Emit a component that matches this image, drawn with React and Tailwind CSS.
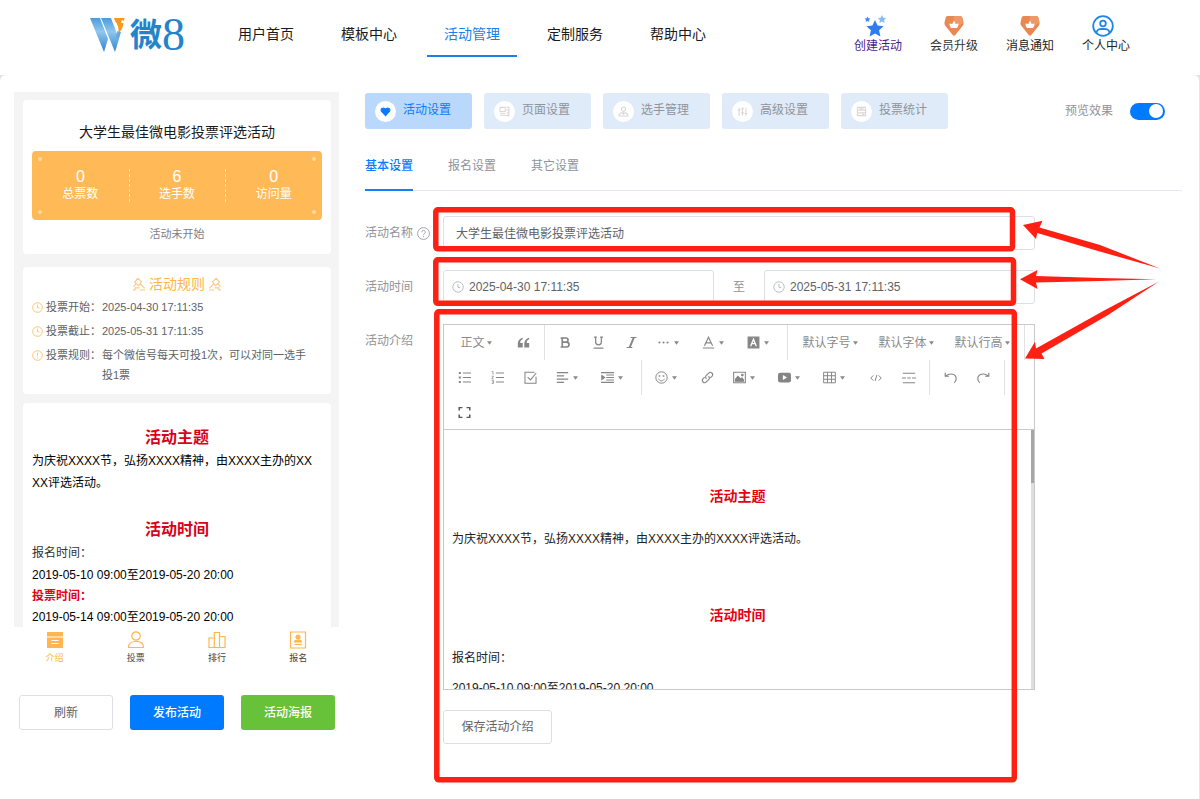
import React, { useState } from "react";

const FONT = "font-['Liberation_Sans','Noto_Sans_CJK_SC',sans-serif]";

function Svg({ children, className = "size-[14px]", box = "0 0 16 16", fill = "none", width = 1.2 }) {
  return (
    <svg viewBox={box} className={className} fill={fill} stroke="currentColor" strokeWidth={width} aria-hidden="true">
      {children}
    </svg>
  );
}

function Logo() {
  return (
    <a href="#home" aria-label="微8" className="flex h-[40px] items-center text-[#2484cb]">
      <svg viewBox="0 0 36 36" className="h-[36px] w-[36px]" aria-hidden="true">
        <defs>
          <linearGradient id="stripe" x1="0" y1="0" x2="0" y2="1">
            <stop offset="0" stopColor="#4d9bd8" />
            <stop offset="0.4" stopColor="#8fc6ee" />
            <stop offset="1" stopColor="#2f86cd" />
          </linearGradient>
        </defs>
        <path d="M0 1H10L18 22L14 35Z" fill="url(#stripe)" />
        <path d="M11 1H21L29 22L25 35Z" fill="url(#stripe)" />
        <path d="M15 30L17.500 22L14 35Z" fill="#5fa9df" />
        <path d="M25 35L31 15L27.500 14L26 20L29 22Z" fill="#5fa9df" />
        <path d="M24 1H34.500L34 4L32 3L31 6L33.500 6C33 10 32 13 28.500 16C29 11 28 8 25 4Z" fill="#f59a1c" />
      </svg>
      <span className="ml-[4px] text-[32px] leading-[40px] font-bold">微</span>
      <span className="font-['Liberation_Serif',serif] text-[46px] leading-[40px]">8</span>
    </a>
  );
}

const NAV = ["用户首页", "模板中心", "活动管理", "定制服务", "帮助中心"];

function Gem() {
  return (
    <svg viewBox="0 0 22 22" className="size-[22px]" aria-hidden="true">
      <path d="M4.500 1H17.500Q18.800 1 19.300 2.500L20.500 7.500Q20.900 9 19.900 10.400L12.500 19.800Q11 21.500 9.500 19.800L2.100 10.400Q1.100 9 1.500 7.500L2.700 2.500Q3.200 1 4.500 1Z" fill="#e98850" />
      <path d="M11 1H17.500Q18.800 1 19.300 2.500L20.500 7.500L11 14Z" fill="#ee9968" />
      <path d="M6.500 8.500L9.300 9L11 5.500L12.700 9L15.500 8.500C15.500 10.500 14.800 12.500 14 13H8C7.200 12.500 6.500 10.500 6.500 8.500Z" fill="#fff" />
    </svg>
  );
}

function Stars() {
  return (
    <svg viewBox="0 0 24 24" className="mr-[6px] size-[24px] shrink-0" aria-hidden="true">
      <path d="M12 6L14.600 11.600L20.500 12.200L16.100 16.300L17.400 22.500L12 19.400L6.600 22.500L7.900 16.300L3.500 12.200L9.400 11.600Z" fill="#2e7cf0" />
      <path d="M4.500 2.500L5.400 4.300L7.400 4.600L6 6L6.300 8L4.500 7L2.700 8L3 6L1.600 4.600L3.600 4.300Z" fill="#3f8cf5" />
      <path d="M19 1L20.300 3.700L23.200 4.100L21.100 6.100L21.600 9L19 7.600L16.400 9L16.900 6.100L14.800 4.100L17.700 3.700Z" fill="#86bbf5" />
    </svg>
  );
}

function Person() {
  return (
    <svg viewBox="0 0 22 22" className="mr-[6px] size-[22px]" fill="none" stroke="#1e86ea" strokeWidth="1.800" aria-hidden="true">
      <circle cx="11" cy="11" r="9.800" />
      <circle cx="11" cy="8.500" r="2.800" />
      <path d="M4.500 18C5 13.500 8 14 11 14S17 13.500 17.500 18" />
    </svg>
  );
}

const ACTIONS = [
  ["创建活动", <Stars key="a" />, "text-[#4b1a8a]"],
  ["会员升级", <Gem key="b" />, "text-[#333]"],
  ["消息通知", <Gem key="c" />, "text-[#222]"],
  ["个人中心", <Person key="d" />, "text-[#222]"],
];

function Header() {
  return (
    <header className="flex h-[75px] items-start bg-white pl-[90px] pr-[70px]">
      <div className="mt-[15px] w-[131px]">
        <Logo />
      </div>
      <nav className="flex gap-[13px]">
        {NAV.map((n) => (
          <a
            key={n}
            href="#nav"
            className={
              n === "活动管理"
                ? "h-[57px] w-[90px] border-b-2 border-[#1b7fe6] pt-[23px] text-center text-[14px] leading-[22px] text-[#1b7fe6]"
                : "h-[57px] w-[90px] pt-[23px] text-center text-[14px] leading-[22px] text-[#1a1a1a]"
            }
          >
            {n}
          </a>
        ))}
      </nav>
      <div className="ml-auto flex gap-[28px] pt-[15px] text-[12px] leading-[18px]">
        {ACTIONS.map(([label, icon, color]) => (
          <a key={label} href="#action" className={color}>
            <span className="flex h-[22px] items-center justify-center">{icon}</span>
            <span className="block whitespace-nowrap">{label}</span>
          </a>
        ))}
      </div>
    </header>
  );
}

function Gavel({ flip }) {
  return (
    <svg viewBox="0 0 16 16" className={flip ? "size-[14px]" : "size-[14px] -scale-x-100"} fill="none" stroke="#fbc98a" strokeWidth="1.300" aria-hidden="true">
      <path d="M5 5.500L9.500 1.500L13 6L8.500 10ZM6.500 8L1.500 13M11.500 8L14.500 11M1 14.800H7M7.500 12.500H12.500V14.800H15" />
    </svg>
  );
}

function ClockIcon({ className }) {
  return (
    <Svg className={className}>
      <circle cx="8" cy="8" r="7" />
      <path d="M8 4V8.500H11" />
    </Svg>
  );
}

function Rule({ icon, label, children }) {
  return (
    <div className="flex items-start pb-[4px] text-[11px] leading-[20px] text-[#606266]">
      <span className="flex h-[20px] w-[14px] items-center text-[#ffb956]">{icon}</span>
      <span className="w-[56px] shrink-0">{label}：</span>
      <span className="w-[212px]">{children}</span>
    </div>
  );
}

const BOTTOM = [
  ["介绍", (
    <svg key="a" viewBox="0 0 18 18" className="size-[18px]" aria-hidden="true">
      <path d="M1 1H17V17H1Z" fill="#ffb550" />
      <path d="M1 6H17M5.500 9.500H12.500M5.500 12.500H12.500" stroke="#fff" strokeWidth="1.100" />
    </svg>
  )],
  ["投票", (
    <Svg key="b" box="0 0 18 18" className="size-[18px]">
      <circle cx="9" cy="5" r="4.200" />
      <path d="M1.500 16.500C1.500 12 4 10.500 9 10.500S16.500 12 16.500 16.500Z" />
    </Svg>
  )],
  ["排行", (
    <Svg key="c" box="0 0 18 18" className="size-[18px]">
      <path d="M1 16.500V7H6.300V16.500ZM6.300 16.500V1.500H11.500V16.500ZM11.500 16.500V5.500H17V16.500Z" />
    </Svg>
  )],
  ["报名", (
    <Svg key="d" box="0 0 18 18" className="size-[18px]">
      <path d="M1.500 1H16.500V17H1.500Z" />
      <circle cx="9" cy="6" r="2" fill="currentColor" />
      <path d="M5.500 11C5.500 8.500 12.500 8.500 12.500 11Z" fill="currentColor" />
      <path d="M5.500 13.500H12.500" />
    </Svg>
  )],
];

function Phone() {
  return (
    <aside className="w-[325px] shrink-0">
      <div className="flex h-[535px] flex-col gap-[9px] overflow-hidden bg-[#f4f4f4] pr-[8px] pl-[9px] pt-[8px]">
        <section className="mb-[4px] h-[154px] shrink-0 rounded-[4px] bg-white px-[9px] pt-[21px] text-center">
          <h1 className="text-[14px] leading-[22px] text-[#1a1a1a]">大学生最佳微电影投票评选活动</h1>
          <dl className="relative mt-[8px] grid h-[69px] grid-cols-3 rounded-[4px] bg-[#ffba57] text-white">
            {[["总票数", "0"], ["选手数", "6"], ["访问量", "0"]].map(([k, v]) => (
              <div key={k} className="flex flex-col-reverse justify-end pt-[17px]">
                <dt className="text-[12px] leading-[16px]">{k}</dt>
                <dd className="text-[16px] leading-[18px]">{v}</dd>
              </div>
            ))}
            <i className="absolute top-[18px] left-1/3 h-[33px] border-l border-dashed border-[#ffe0b0]" />
            <i className="absolute top-[18px] left-2/3 h-[33px] border-l border-dashed border-[#ffe0b0]" />
            <i className="absolute top-[6px] left-[6px] size-[4px] rounded-full bg-[#ffd9a0]" />
            <i className="absolute top-[6px] right-[6px] size-[4px] rounded-full bg-[#ffd9a0]" />
            <i className="absolute bottom-[6px] left-[6px] size-[4px] rounded-full bg-[#ffd9a0]" />
            <i className="absolute right-[6px] bottom-[6px] size-[4px] rounded-full bg-[#ffd9a0]" />
          </dl>
          <p className="mt-[4px] text-[11px] leading-[20px] text-[#7a7f8a]">活动未开始</p>
        </section>
        <section className="h-[127px] shrink-0 rounded-[4px] bg-white px-[9px] pt-[7px]">
          <h2 className="mb-[3px] flex items-center justify-center gap-[3px] text-[14px] leading-[20px] text-[#ffb547]">
            <Gavel />
            活动规则
            <Gavel flip />
          </h2>
          <Rule label="投票开始" icon={<ClockIcon className="size-[11px]" />}>2025-04-30 17:11:35</Rule>
          <Rule label="投票截止" icon={<ClockIcon className="size-[11px]" />}>2025-05-31 17:11:35</Rule>
          <Rule
            label="投票规则"
            icon={
              <Svg className="size-[11px]">
                <circle cx="8" cy="8" r="7" />
                <path d="M8 4V9M8 10.500V12" />
              </Svg>
            }
          >
            每个微信号每天可投1次，可以对同一选手投1票
          </Rule>
        </section>
        <section className="grow rounded-t-[4px] bg-white px-[9px] pt-[23px] text-[12px] leading-[22px] text-black">
          <h2 className="text-center text-[16px] leading-[24px] font-bold text-[#d9001b]">活动主题</h2>
          <p className="pr-[6px] break-all">为庆祝XXXX节，弘扬XXXX精神，由XXXX主办的XXXX评选活动。</p>
          <h2 className="mt-[24px] text-center text-[16px] leading-[24px] font-bold text-[#d9001b]">活动时间</h2>
          <p className="text-[#333]">报名时间：</p>
          <p>2019-05-10 09:00至2019-05-20 20:00</p>
          <p className="leading-[21px] font-bold text-[#e60012]">投票时间：</p>
          <p className="leading-[21px] whitespace-nowrap">2019-05-14 09:00至2019-05-20 20:00</p>
        </section>
      </div>
      <nav className="grid grid-cols-4 pt-[4px] text-center text-[9px] leading-[19px]">
        {BOTTOM.map(([label, icon], i) => (
          <a key={label} href="#tab" className="flex flex-col items-center text-[#ffb550]">
            {icon}
            <span className={i === 0 ? "text-[#ffb550]" : "text-[#444]"}>{label}</span>
          </a>
        ))}
      </nav>
      <div className="mt-[27px] grid grid-cols-3 gap-[17px] pr-[4px] pl-[5px] text-[12px]">
        <button className="h-[35px] rounded-[3px] border border-[#dcdfe6] bg-white text-[#606266]">刷新</button>
        <button className="h-[35px] rounded-[3px] bg-[#007bff] font-medium text-white">发布活动</button>
        <button className="h-[35px] rounded-[3px] bg-[#67c23a] font-medium text-white">活动海报</button>
      </div>
    </aside>
  );
}

const TABS = [
  ["活动设置", <path key="p" d="M8 14L2 7.500C0 4 4.500 1.500 8 4.500C11.500 1.500 16 4 14 7.500Z" fill="currentColor" />],
  ["页面设置", <path key="p" d="M1.500 2H9V8H1.500ZM11 2H14.500V14H11M1.500 10.500H9M1.500 13.500H14.500M11 6H14.500M11 10H14.500" />],
  ["选手管理", <path key="p" d="M8 1.500A3 3 0 1 1 8 7.500A3 3 0 1 1 8 1.500ZM8 7.500V11M1.500 14.500C1.500 11 4 10 5.500 9.500L8 12L10.500 9.500C12 10 14.500 11 14.500 14.500Z" />],
  ["高级设置", <path key="p" d="M3 2V14M1 6H5M8 2V14M6 4H10M6 10H10M13 2V14M11 11H15" />],
  ["投票统计", <path key="p" d="M2 2H14V6H2ZM2 6H14V14H2ZM2 10H14M5 4H11M9 12H12" />],
];

function Sep() {
  return (
    <span className="flex h-[35px] w-[9px] justify-center">
      <i className="w-px bg-[#e2e2e2]" />
    </span>
  );
}

function Tool({ label, drop, children }) {
  return (
    <button
      aria-label={label}
      className={
        drop
          ? "flex h-[35px] w-[45px] items-center justify-center gap-[4px] pr-[5px] text-[#858585]"
          : "flex h-[35px] w-[33px] items-center justify-center text-[#858585]"
      }
    >
      {children}
      {drop && <Caret />}
    </button>
  );
}

function Caret() {
  return (
    <svg viewBox="0 0 6 4" className="h-[4px] w-[5px]" fill="#8a8a8a" aria-hidden="true">
      <path d="M0 0H6L3 4Z" />
    </svg>
  );
}

function TextTool({ children, wide }) {
  return (
    <button
      className={
        wide
          ? "flex h-[35px] w-[76px] items-center justify-center gap-[2px] text-[12px] text-[#8a8a8a]"
          : "flex h-[35px] w-[59px] items-center justify-center gap-[2px] pr-[3px] text-[12px] text-[#8a8a8a]"
      }
    >
      {children}
      <Caret />
    </button>
  );
}

function Toolbar() {
  return (
    <div role="toolbar" className="flex h-[105px] flex-wrap content-start border-b border-[#c9c9c9] pl-[4px]">
      <TextTool>正文</TextTool>
      <Tool label="引用">
        <Svg className="size-[13px]" fill="currentColor" width={0}>
          <path d="M7 2C4 3 1 5 1 10V14H7V8.500H4C4 6 5 4.500 7 4ZM15 2C12 3 9 5 9 10V14H15V8.500H12C12 6 13 4.500 15 4Z" />
        </Svg>
      </Tool>
      <Sep />
      <Tool label="粗体">
        <Svg className="size-[13px]" width={2}>
          <path d="M4 2.500H8.500C12 2.500 12 7.500 8.500 7.500H4ZM4 7.500H9C13.500 7.500 13.500 13.500 9 13.500H4ZM2 2.500H5M2 13.500H5" />
        </Svg>
      </Tool>
      <Tool label="下划线">
        <Svg className="size-[13px]" width={1.5}>
          <path d="M4.500 1.500V7.500C4.500 12 11.500 12 11.500 7.500V1.500M2.500 1.500H6M10 1.500H13.500M2 14.800H14" />
        </Svg>
      </Tool>
      <Tool label="斜体">
        <Svg className="size-[13px]" width={1.4}>
          <path d="M7 1.800H14M2 14.200H9" />
          <path d="M10.800 2L5.800 14" strokeWidth="2.400" />
        </Svg>
      </Tool>
      <Tool label="更多" drop>
        <Svg className="size-[13px]" fill="currentColor" width={0}>
          <circle cx="3" cy="8" r="1.300" />
          <circle cx="8" cy="8" r="1.300" />
          <circle cx="13" cy="8" r="1.300" />
        </Svg>
      </Tool>
      <Tool label="文字颜色" drop>
        <Svg className="size-[13px]" width={1.4}>
          <path d="M3 12L8 1.500L13 12M5 8.500H11M1 14.800H15" />
        </Svg>
      </Tool>
      <Tool label="背景色" drop>
        <Svg className="size-[13px]" width={1.6}>
          <path d="M1.500 1.500H14.500V14.500H1.500Z" fill="currentColor" />
          <path d="M4.500 12.500L8 4L11.500 12.500M6 9.500H10" stroke="#fff" />
        </Svg>
      </Tool>
      <Sep />
      <TextTool wide>默认字号</TextTool>
      <TextTool wide>默认字体</TextTool>
      <TextTool wide>默认行高</TextTool>
      <Sep />
      <Tool label="无序列表">
        <Svg className="size-[13px]" width={1.4}>
          <path d="M6 2.500H16M6 8H16M6 13.500H16" />
          <path d="M1 2.500H3.500M1 8H3.500M1 13.500H3.500" strokeWidth="2.600" />
        </Svg>
      </Tool>
      <Tool label="有序列表">
        <Svg className="size-[13px]" width={1.3}>
          <path d="M6 2.500H16M6 8H16M6 13.500H16" />
          <path d="M1 1L2.500 .5V4.500M.8 6.500H3L1 9.500H3.200M.8 11.500H3V15.300H.8M1.500 13.400H3" strokeWidth="0.900" />
        </Svg>
      </Tool>
      <Tool label="待办">
        <Svg className="size-[13px]" width={1.3}>
          <path d="M14.800 7V15H1.200V1.500H13M4.500 7.500L8 11L15 2.500" />
        </Svg>
      </Tool>
      <Tool label="对齐" drop>
        <Svg className="size-[13px]" width={1.3}>
          <path d="M1 2H15M1 6H10M1 10H15M1 14H10" />
        </Svg>
      </Tool>
      <Tool label="缩进" drop>
        <Svg className="size-[13px]" width={1.3}>
          <path d="M0 2H16M6.500 5H16M6.500 8H16M6.500 11H16M0 14H16" />
          <path d="M1 5.500L4.500 8L1 10.500Z" fill="currentColor" />
        </Svg>
      </Tool>
      <Sep />
      <Tool label="表情" drop>
        <Svg className="size-[13px]">
          <circle cx="8" cy="8" r="7" />
          <path d="M4.500 9.500C5.500 13 10.500 13 11.500 9.500" />
          <path d="M4.500 6.200H6.500M9.500 6.200H11.500" strokeWidth="1.800" />
        </Svg>
      </Tool>
      <Tool label="链接">
        <Svg className="size-[13px]" width={1.4}>
          <path d="M6.800 9.500C5.200 8 5.500 6.500 6.500 5.500L9.500 2.500C12 0 16 3.500 13.500 6.500L11.500 8.500M9.200 6.500C10.800 8 10.500 9.500 9.500 10.500L6.500 13.500C4 16 0 12.500 2.500 9.500L4.500 7.500" />
        </Svg>
      </Tool>
      <Tool label="图片" drop>
        <Svg className="size-[13px]" width={1.3}>
          <path d="M.8 1.500H15.200V14.500H.8Z" />
          <path d="M3 12.500V10L6 6.500L9 9.500L11 8.500L13 11V12.500Z" fill="currentColor" />
          <circle cx="11.500" cy="5" r="1" fill="currentColor" />
        </Svg>
      </Tool>
      <Tool label="视频" drop>
        <Svg className="size-[13px]" width={0}>
          <rect x="0" y="2" width="16" height="12" rx="2.500" fill="currentColor" />
          <path d="M6 5L11 8L6 11Z" fill="#fff" />
        </Svg>
      </Tool>
      <Tool label="表格" drop>
        <Svg className="size-[13px]" width={1.2}>
          <path d="M.8 1.500H15.200V14.500H.8ZM.8 5.800H15.200M.8 10.200H15.200M5.500 1.500V14.500M10.500 1.500V14.500" />
        </Svg>
      </Tool>
      <Tool label="代码块">
        <Svg className="size-[12px]" width={1.3}>
          <path d="M4.500 4.500L1 8L4.500 11.500M11.500 4.500L15 8L11.500 11.500M9.200 4L6.800 12" />
        </Svg>
      </Tool>
      <Tool label="分割线">
        <Svg className="size-[14px]" width={1.2}>
          <path d="M1 2.500H15M1 13.500H15M0 8H4.500M6 8H10M11.500 8H16" />
        </Svg>
      </Tool>
      <Sep />
      <Tool label="撤销">
        <Svg className="size-[13px]" width={1.4}>
          <path d="M2 6C8 1.500 15 4 15 9.500C15 12 14 13.500 12.500 14.500M1.500 2V6.500H6" />
        </Svg>
      </Tool>
      <Tool label="重做">
        <Svg className="size-[13px]" width={1.4}>
          <path d="M14 6C8 1.500 1 4 1 9.500C1 12 2 13.500 3.500 14.500M14.500 2V6.500H10" />
        </Svg>
      </Tool>
      <Sep />
      <Tool label="全屏">
        <Svg className="size-[13px] text-[#555]" width={1.8}>
          <path d="M1.500 5.500V2H5.500M10.500 2H14.500V5.500M14.500 10.500V14H10.500M5.500 14H1.500V10.500" />
        </Svg>
      </Tool>
    </div>
  );
}

function DateField({ id, label, value }) {
  return (
    <label htmlFor={id} className="flex h-[34px] flex-1 items-center gap-[5px] rounded-[3px] border border-[#dcdfe6] px-[8px]">
      <ClockIcon className="size-[12px] shrink-0 text-[#b4b8c0]" />
      <input id={id} aria-label={label} defaultValue={value} className="w-full min-w-0 text-[12px] text-[#606266] outline-none" />
    </label>
  );
}

function Annotations() {
  return (
    <svg viewBox="0 0 1200 799" className="pointer-events-none absolute top-0 left-0 h-[799px] w-[1200px]" aria-hidden="true">
      <g fill="none" stroke="#fe2013" strokeWidth="5.500">
        <rect x="435.800" y="209.800" width="576.700" height="39" rx="2" />
        <rect x="435.800" y="259.800" width="577.700" height="43.500" rx="2" />
        <rect x="436.800" y="311.800" width="577.500" height="468" rx="2" />
      </g>
      <g fill="#fe2013">
        <path d="M1023 225L1042.500 220.700L1039.500 227.500L1100 245L1160 268.500L1098 251L1037.300 233L1036 239Z" />
        <path d="M1020 279.300L1037.500 270L1036 276L1100 278L1156 279.200L1100 281L1036 282.500L1037.500 289Z" />
        <path d="M1025 358.500L1035 341.700L1036 348.500L1105 310L1159 281.500L1108 315L1041.500 353.500L1044.500 359Z" />
      </g>
    </svg>
  );
}

function Settings() {
  const [preview, setPreview] = useState(true);
  return (
    <section className="min-w-0 flex-1 pt-px text-[12px]">
      <div className="flex items-center">
        <div className="flex gap-[12px]">
          {TABS.map(([label, shape], i) => (
            <button
              key={label}
              className={
                i === 0
                  ? "flex h-[36px] w-[107px] gap-[7px] rounded-[3px] bg-[#b9d8fb] pl-[10px] text-[#0a7bff]"
                  : "flex h-[36px] w-[107px] gap-[7px] rounded-[3px] bg-[#dfebf9] pl-[10px] text-[#909399]"
              }
            >
              <span
                className={
                  i === 0
                    ? "mt-[8px] flex size-[21px] items-center justify-center rounded-full bg-white text-[#0a7bff]"
                    : "mt-[8px] flex size-[21px] items-center justify-center rounded-full bg-white text-[#dcd6d8]"
                }
              >
                <Svg className="size-[11px]" width={1.5}>{shape}</Svg>
              </span>
              <span className="leading-[34px]">{label}</span>
            </button>
          ))}
        </div>
        <label className="ml-auto flex items-center gap-[17px] pr-[17px] text-[#909399]">
          预览效果
          <input type="checkbox" className="peer sr-only" checked={preview} onChange={() => setPreview(!preview)} />
          <span className="flex h-[17px] w-[35px] items-center rounded-full bg-[#c0c4cc] px-[2px] peer-checked:justify-end peer-checked:bg-[#007bff]">
            <i className="size-[14px] rounded-full bg-white" />
          </span>
        </label>
      </div>
      <div className="mt-[9px] flex gap-[35px] border-b border-[#e4e7ed] leading-[52px] text-[#909399]">
        <button className="-mb-px h-[53px] border-b-2 border-[#1580f5] pt-[2px] font-medium text-[#0a7bff]">基本设置</button>
        <button className="h-[52px] pt-[2px]">报名设置</button>
        <button className="h-[52px] pt-[2px]">其它设置</button>
      </div>
      <form className="mt-[25px] flex max-w-[670px] flex-col gap-[20px] text-[#909399]" onSubmit={(e) => e.preventDefault()}>
        <div className="flex">
          <label htmlFor="name" className="flex w-[78px] shrink-0 items-center gap-[4px]">
            活动名称
            <Svg className="size-[13px]" width={1}>
              <circle cx="8" cy="8" r="7.300" />
              <path d="M5.800 6.500C5.800 3.300 10.300 3.500 10.300 6.300C10.300 8 8 8 8 10M8 11.300V12.500" />
            </Svg>
          </label>
          <input
            id="name"
            defaultValue="大学生最佳微电影投票评选活动"
            className="h-[34px] min-w-0 flex-1 rounded-[3px] border border-[#dcdfe6] px-[12px] pb-[2px] text-[#606266] outline-none"
          />
        </div>
        <div className="flex items-center">
          <label htmlFor="start" className="w-[78px] shrink-0">活动时间</label>
          <DateField id="start" label="开始时间" value="2025-04-30 17:11:35" />
          <span className="w-[50px] text-center">至</span>
          <DateField id="end" label="结束时间" value="2025-05-31 17:11:35" />
        </div>
        <div className="flex">
          <span id="intro" className="w-[78px] shrink-0 leading-[34px]">活动介绍</span>
          <div className="min-w-0 flex-1">
            <div className="border border-[#c9c9c9]">
              <Toolbar />
              <div className="flex h-[259px]">
                <div role="textbox" aria-labelledby="intro" className="flex-1 overflow-hidden px-[8px] text-[12px] leading-[20px] text-[#222]">
                  <h3 className="mt-[55px] text-center text-[14px] leading-[22px] font-bold text-[#e60012]">活动主题</h3>
                  <p className="mt-[22px]">为庆祝XXXX节，弘扬XXXX精神，由XXXX主办的XXXX评选活动。</p>
                  <h3 className="mt-[55px] text-center text-[14px] leading-[22px] font-bold text-[#e60012]">活动时间</h3>
                  <p className="mt-[22px]">报名时间：</p>
                  <p className="mt-[10px]">2019-05-10 09:00至2019-05-20 20:00</p>
                </div>
                <div className="w-[3px] bg-[#dedede]">
                  <div className="h-[53px] bg-[#a6a6a6]" />
                </div>
              </div>
            </div>
            <button className="mt-[20px] h-[34px] w-[109px] rounded-[3px] border border-[#dcdfe6] text-[#606266]">保存活动介绍</button>
          </div>
        </div>
      </form>
    </section>
  );
}

export default function App() {
  return (
    <div className={`${FONT} relative min-h-screen overflow-hidden bg-white`}>
      <Header />
      <div className="bg-[#e2e2e2]">
        <main className="flex min-h-[724px] gap-[26px] rounded-t-[6px] border-r border-[#f3dfe2] bg-white pt-[17px] pr-[17px] pl-[14px]">
          <Phone />
          <Settings />
        </main>
      </div>
      <Annotations />
    </div>
  );
}
